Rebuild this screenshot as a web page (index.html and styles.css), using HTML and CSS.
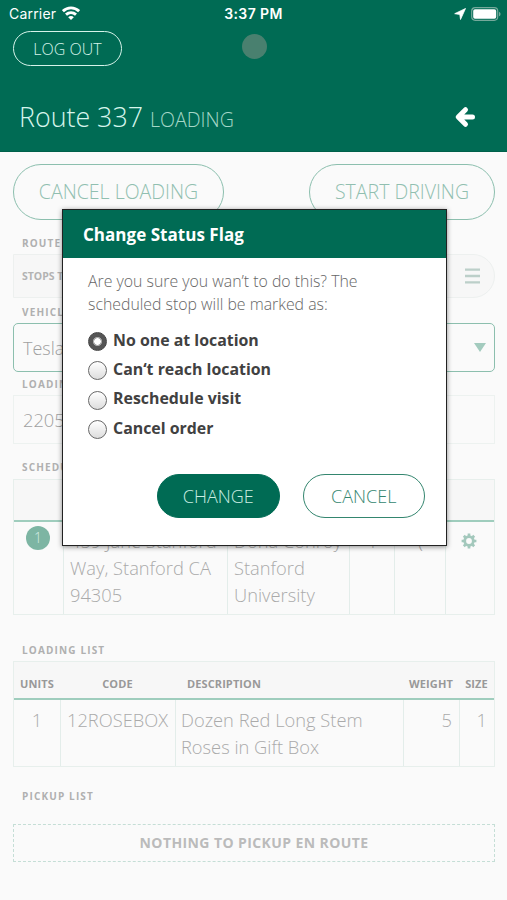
FILE: index.html
```html
<!DOCTYPE html>
<html lang="en">
<head>
<meta charset="utf-8">
<meta name="viewport" content="width=device-width, initial-scale=1">
<title>Route 337</title>
<link rel="stylesheet" href="styles.css">
</head>
<body>
<header class="top">
  <div class="status">
    <div class="carrier"><span>Carrier</span>
      <svg class="wifi" viewBox="0 0 18 14" width="18" height="14"><g fill="none" stroke="#fff" stroke-width="2.900"><path d="M.9 5.200C5.500.8 12.500.8 17.100 5.200"/><path d="M4 8.700C7 6 11 6 14 8.700"/></g><path d="M9 13.900 6.200 11.200c1.500-1.500 4.100-1.500 5.600 0z" fill="#fff"/></svg>
    </div>
    <span class="time">3:37 PM</span>
    <div class="signals">
      <svg viewBox="0 0 12 12" width="12" height="12"><path d="M11.500.5.700 5.700l5.100.7.700 5.100z" fill="#fff" stroke="#fff" stroke-width=".8" stroke-linejoin="round"/></svg>
      <svg viewBox="0 0 30 14" width="30" height="14"><rect x=".7" y=".7" width="26" height="12.600" rx="3.500" fill="none" stroke="#75a99b" stroke-width="1.200"/><rect x="2.200" y="2.200" width="23" height="9.600" rx="1.800" fill="#fff"/><path d="M28 4.700c2 .8 2 3.800 0 4.600z" fill="#75a99b"/></svg>
    </div>
  </div>
  <div class="tools"><button class="logout">LOG OUT</button><span class="camera"></span></div>
  <div class="title-row">
    <h1>Route 337 <small>LOADING</small></h1>
    <svg class="back" viewBox="0 0 22 22" width="22" height="22"><path d="M18.500 11H5M11.500 3.700 4.200 11l7.300 7.300" fill="none" stroke="#fff" stroke-width="5" stroke-linecap="round" stroke-linejoin="round"/></svg>
  </div>
</header>
<main>
  <div class="actions"><button class="pill cancel-load">CANCEL LOADING</button><button class="pill start">START DRIVING</button></div>
  <h2 class="label l-route">ROUTE</h2>
  <div class="stops"><b>STOPS T</b><svg viewBox="0 0 15 16" width="15" height="16"><path d="M0 1.700h15M0 8h15M0 14.300h15" stroke="#bccfc9" stroke-width="2.300"/></svg></div>
  <h2 class="label l-vehicle">VEHICLE</h2>
  <div class="select"><span>Tesla</span><svg viewBox="0 0 12 9" width="12" height="9"><path d="M0 0h12L6 9z" fill="#a3cbbe"/></svg></div>
  <h2 class="label l-loading">LOADING</h2>
  <div class="field">2205</div>
  <h2 class="label l-sched">SCHEDULE</h2>
  <section class="grid sched">
    <div class="head"></div>
    <div class="row">
      <div class="cell stop"><span class="badge">1</span></div>
      <div class="cell">459 Jane Stanford<br>Way, Stanford CA<br>94305</div>
      <div class="cell">Dona Conroy<br>Stanford<br>University</div>
      <div class="cell num">1</div>
      <div class="cell num">(</div>
      <div class="cell gear"><svg viewBox="-8 -8 16 16" width="16" height="16"><circle r="4.300" fill="none" stroke="#a3c8bc" stroke-width="2.800"/><g stroke="#a3c8bc" stroke-width="2.700"><path d="M0-7.400V-5M0 7.400V5M-7.400 0H-5M7.400 0H5M-5.200-5.200l1.700 1.700M5.200-5.200 3.500-3.500M-5.200 5.200l1.700-1.700M5.200 5.200 3.500 3.500"/></g></svg></div>
    </div>
  </section>
  <h2 class="label l-list">LOADING LIST</h2>
  <section class="grid items">
    <div class="head"><span>UNITS</span><span>CODE</span><span class="desc">DESCRIPTION</span><span>WEIGHT</span><span>SIZE</span></div>
    <div class="row">
      <div class="cell center">1</div>
      <div class="cell">12ROSEBOX</div>
      <div class="cell">Dozen Red Long Stem<br>Roses in Gift Box</div>
      <div class="cell right">5</div>
      <div class="cell right">1</div>
    </div>
  </section>
  <h2 class="label l-pickup">PICKUP LIST</h2>
  <div class="empty">NOTHING TO PICKUP EN ROUTE</div>
</main>
<div class="modal" role="dialog">
  <h3>Change Status Flag</h3>
  <div class="modal-body">
    <p>Are you sure you wan’t to do this? The<br>scheduled stop will be marked as:</p>
    <div class="options">
      <div class="option"><span class="radio on"></span><span>No one at location</span></div>
      <div class="option"><span class="radio"></span><span>Can‘t reach location</span></div>
      <div class="option"><span class="radio"></span><span>Reschedule visit</span></div>
      <div class="option"><span class="radio"></span><span>Cancel order</span></div>
    </div>
    <div class="modal-actions"><button class="btn solid">CHANGE</button><button class="btn">CANCEL</button></div>
  </div>
</div>
</body>
</html>
```
FILE: styles.css
```css
* { box-sizing: border-box; }
body { margin: 0; width: 507px; height: 900px; overflow: hidden; position: relative; background: #fafafa; font-family: "Open Sans", sans-serif; font-weight: 300; color: #a0a0a0; }
h1, h2, h3, p { margin: 0; }
button { font: inherit; padding: 0; background: none; white-space: nowrap; }
svg { display: block; flex: none; }
.top { height: 152px; background: #006b54; color: #fff; border-bottom: 1px solid #00604a; }
.status { height: 28px; display: grid; grid-template-columns: 1fr auto 1fr; align-items: center; padding: 0 7px 0 9px; font-family: Inter, sans-serif; font-size: 14px; font-weight: 400; line-height: 28px; }
.carrier { display: flex; gap: 6px; align-items: center; letter-spacing: .2px; }
.wifi { margin-top: -2px; }
.time { font-weight: 600; letter-spacing: .4px; margin-left: -2px; }
.signals { display: flex; justify-content: flex-end; align-items: center; gap: 5px; margin: -1px -1px 0 0; }
.tools { height: 38px; padding: 3px 0 0 13px; display: flex; gap: 120px; }
.logout { width: 109px; height: 35px; border: 1.500px solid #d6f3ea; border-radius: 18px; color: #d6f3ea; font-size: 16px; line-height: 30px; }
.camera { width: 25px; height: 25px; border-radius: 50%; background: #49806f; margin-top: 3px; }
.title-row { display: flex; justify-content: space-between; padding: 33px 31px 0 19px; }
h1 { font-size: 26.800px; line-height: 36px; font-weight: 300; color: #d6f5ec; white-space: nowrap; }
small { font-size: 19.600px; color: #a4d7c7; }
.back { margin-top: 7px; }
main { padding: 12px 12px 0 13px; }
.actions { display: flex; justify-content: space-between; height: 56px; }
.pill { height: 56px; border: 1.500px solid #8cbfae; border-radius: 28px; color: #91bfb0; font-size: 19.500px; line-height: 54px; }
.cancel-load { width: 211px; }
.start { width: 186px; }
.label { font-size: 10px; line-height: 14px; height: 14px; font-weight: 700; letter-spacing: 1.150px; color: #b0b0b0; padding-left: 9px; }
.l-route { margin: 16px 0 4px; }
.stops { height: 44px; border: 1px solid #edf0ef; background: #f7f7f7; border-radius: 0 22px 22px 0; display: flex; align-items: center; justify-content: space-between; padding: 0 14px 0 8px; font-size: 10.500px; color: #b3b3b3; }
.stops b { font-weight: 700; }
.l-vehicle { margin: 7px 0 4px; }
.select { height: 49px; border: 1.500px solid #8cbfae; border-radius: 5px; display: flex; align-items: center; justify-content: space-between; padding: 0 8px 0 9px; font-size: 18px; }
.l-loading { margin: 5px 0 4px; }
.field { height: 49px; border: 1px solid #edf2f0; padding-left: 9px; font-size: 18.300px; line-height: 47px; }
.l-sched { margin: 16px 0 5px; }
.grid { border: 1px solid #e7efec; color: #aaa; }
.head { background: #f7f7f7; border-bottom: 2px solid #9fcdbd; }
.row, .items .head { display: grid; }
.cell { border-left: 1px solid #e3edea; padding: 6px 5px 0; font-size: 18.300px; line-height: 27px; white-space: nowrap; }
.cell:first-child { border-left: 0; }
.sched { height: 136px; }
.sched .head { height: 42px; }
.sched .cell { padding-top: 5px; padding-left: 6px; }
.sched .row { height: 92px; grid-template-columns: 49px 164px 122px 45px 51px 1fr; }
.num { text-align: center; }
.sched .stop { padding: 4px 0 0 12px; }
.badge { display: block; width: 24px; height: 24px; border-radius: 50%; background: #7db5a3; color: #d5eee5; font-size: 14px; line-height: 24px; text-align: center; }
.sched .gear { padding: 11px 0 0 15px; }
.l-list { margin: 28px 0 4px; }
.items { height: 106px; }
.items .head, .items .row { grid-template-columns: 46px 115px 228px 56px 1fr; }
.items .cell:nth-child(2) { padding-left: 6px; }
.items .head { height: 38px; font-size: 11px; line-height: 44px; font-weight: 700; color: #999; text-align: center; letter-spacing: .1px; }
.items .head .desc { text-align: left; padding-left: 12px; }
.items .row { height: 66px; }
.center { text-align: center; }
.right { text-align: right; padding-right: 7px; }
.l-pickup { margin: 22px 0 21px; }
.empty { height: 38px; border: 1.500px dashed #c5ded6; text-align: center; font-size: 14px; letter-spacing: .4px; line-height: 36px; font-weight: 700; color: #bbb; }
.modal { position: absolute; left: 62px; top: 209px; width: 385px; height: 337px; border: 1.500px solid #222; background: #fff; box-shadow: 0 1px 5px rgba(0,0,0,.45); }
.modal h3 { background: #006b54; color: #fff; height: 48px; line-height: 49px; font-size: 17px; font-weight: 700; letter-spacing: .03px; padding-left: 20px; }
.modal-body { padding: 12px 21px 0 25px; }
.modal p { font-size: 15.850px; line-height: 23px; color: #666; font-weight: 300; white-space: nowrap; }
.options { margin-top: 11px; }
.option { height: 29.300px; display: flex; align-items: center; gap: 6px; font-size: 15.900px; line-height: 25px; font-weight: 700; color: #414141; white-space: nowrap; }
.option span:last-child { margin-top: -3px; }
.radio { width: 19px; height: 19px; border: 1.500px solid #686868; border-radius: 50%; background: linear-gradient(#fff, #ddd); flex: none; }
.radio.on { border-color: #444; background: radial-gradient(circle, #fff 0 3px, #aaa 3.500px 4.200px, #555 5px); }
.modal-actions { display: flex; justify-content: flex-end; gap: 23px; margin-top: 30px; }
.btn { width: 122.500px; height: 44px; border: 1.500px solid #34866f; border-radius: 22px; color: #34866f; font-size: 18px; line-height: 42px; }
.solid { background: #006b54; border-color: #006b54; color: #cceee3; }
```
